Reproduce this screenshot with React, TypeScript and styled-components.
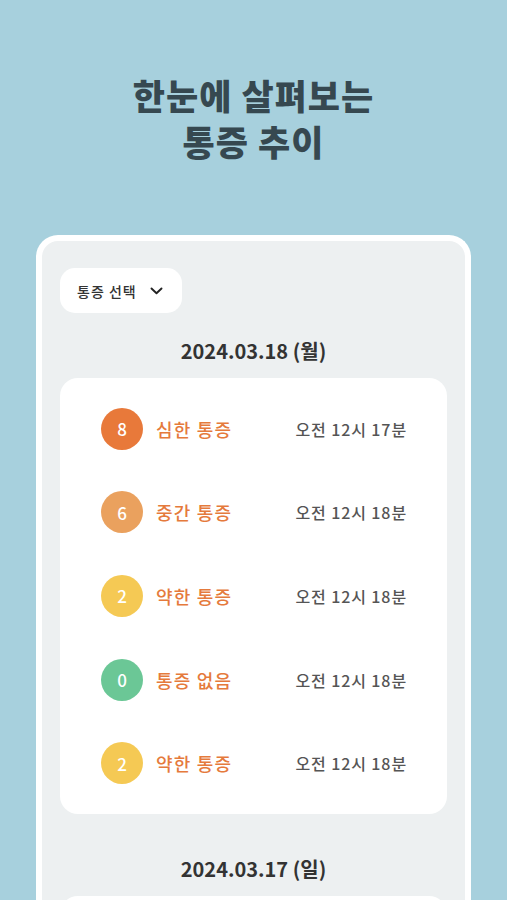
import React from "react";
import styled, { createGlobalStyle } from "styled-components";

const Global = createGlobalStyle`
  html, body { margin: 0; padding: 0; }
  body {
    background: #a7d0dd;
    font-family: "Noto Sans CJK KR", "Noto Sans", sans-serif;
    overflow: hidden;
  }
`;

const Page = styled.div`
  width: 507px;
  height: 900px;
  overflow: hidden;
  display: flex;
  flex-direction: column;
  align-items: center;
  padding-top: 72px;
  box-sizing: border-box;
`;

const Title = styled.h1`
  margin: 0;
  font-size: 35px;
  line-height: 46px;
  font-weight: 900;
  color: #364850;
  text-align: center;
  letter-spacing: 1px;
`;

const Frame = styled.div`
  margin-top: 71px;
  width: 435px;
  box-sizing: border-box;
  border: 6px solid #ffffff;
  border-bottom: none;
  border-radius: 22px 22px 0 0;
  background: #edf0f1;
  padding: 27px 18px 0;
  display: flex;
  flex-direction: column;
  flex: 1;
`;

const Dropdown = styled.button`
  align-self: flex-start;
  height: 45px;
  width: 122px;
  border: none;
  border-radius: 15px;
  background: #ffffff;
  display: flex;
  align-items: center;
  padding: 0 19px 0 17px;
  box-sizing: border-box;
  font-family: inherit;
  font-size: 14px;
  font-weight: 500;
  letter-spacing: 1px;
  color: #333;
  justify-content: space-between;
`;

const Section = styled.section<{ $first?: boolean }>`
  display: flex;
  flex-direction: column;
  margin-top: ${(p) => (p.$first ? "26px" : "43px")};
`;

const DateLabel = styled.div`
  text-align: center;
  font-size: 20px;
  line-height: 24px;
  font-weight: 600;
  color: #333;
  margin-bottom: 15px;
`;

const Card = styled.div`
  background: #ffffff;
  border-radius: 18px;
  padding: 9px 40px 9px 41px;
  min-height: 40px;
  display: flex;
  flex-direction: column;
`;

const Row = styled.div`
  height: 83.6px;
  display: flex;
  align-items: center;
`;

const Badge = styled.div<{ $color: string }>`
  width: 42px;
  height: 42px;
  border-radius: 50%;
  background: ${(p) => p.$color};
  color: #fff;
  display: flex;
  align-items: center;
  justify-content: center;
  font-size: 17px;
  font-weight: 500;
  flex-shrink: 0;
`;

const Level = styled.span`
  margin-left: 13px;
  font-size: 18px;
  font-weight: 500;
  letter-spacing: 1.2px;
  color: #e57a3c;
  flex: 1;
`;

const Time = styled.span`
  font-size: 16px;
  font-weight: 500;
  letter-spacing: 0.9px;
  color: #555;
`;

const colors: Record<number, string> = {
  8: "#e8793a",
  6: "#eaa15e",
  2: "#f5c954",
  0: "#6bc796",
};

const labels: Record<number, string> = {
  8: "심한 통증",
  6: "중간 통증",
  2: "약한 통증",
  0: "통증 없음",
};

const days = [
  {
    date: "2024.03.18 (월)",
    entries: [
      { v: 8, t: "오전 12시 17분" },
      { v: 6, t: "오전 12시 18분" },
      { v: 2, t: "오전 12시 18분" },
      { v: 0, t: "오전 12시 18분" },
      { v: 2, t: "오전 12시 18분" },
    ],
  },
  {
    date: "2024.03.17 (일)",
    entries: [] as { v: number; t: string }[],
  },
];

const Chevron = () => (
  <svg width="13" height="8" viewBox="0 0 13 8" fill="none">
    <path d="M1.5 1.5L6.5 6.2L11.5 1.5" stroke="#222" strokeWidth="1.9" strokeLinecap="round" strokeLinejoin="round" />
  </svg>
);

export default function App() {
  return (
    <>
      <Global />
      <Page>
        <Title>
          한눈에 살펴보는
          <br />
          통증 추이
        </Title>
        <Frame>
          <Dropdown>
            <span>통증 선택</span>
            <Chevron />
          </Dropdown>
          {days.map((d, i) => (
            <Section key={d.date} $first={i === 0}>
              <DateLabel>{d.date}</DateLabel>
              <Card>
                {d.entries.map((e, j) => (
                  <Row key={j}>
                    <Badge $color={colors[e.v]}>{e.v}</Badge>
                    <Level>{labels[e.v]}</Level>
                    <Time>{e.t}</Time>
                  </Row>
                ))}
              </Card>
            </Section>
          ))}
        </Frame>
      </Page>
    </>
  );
}
